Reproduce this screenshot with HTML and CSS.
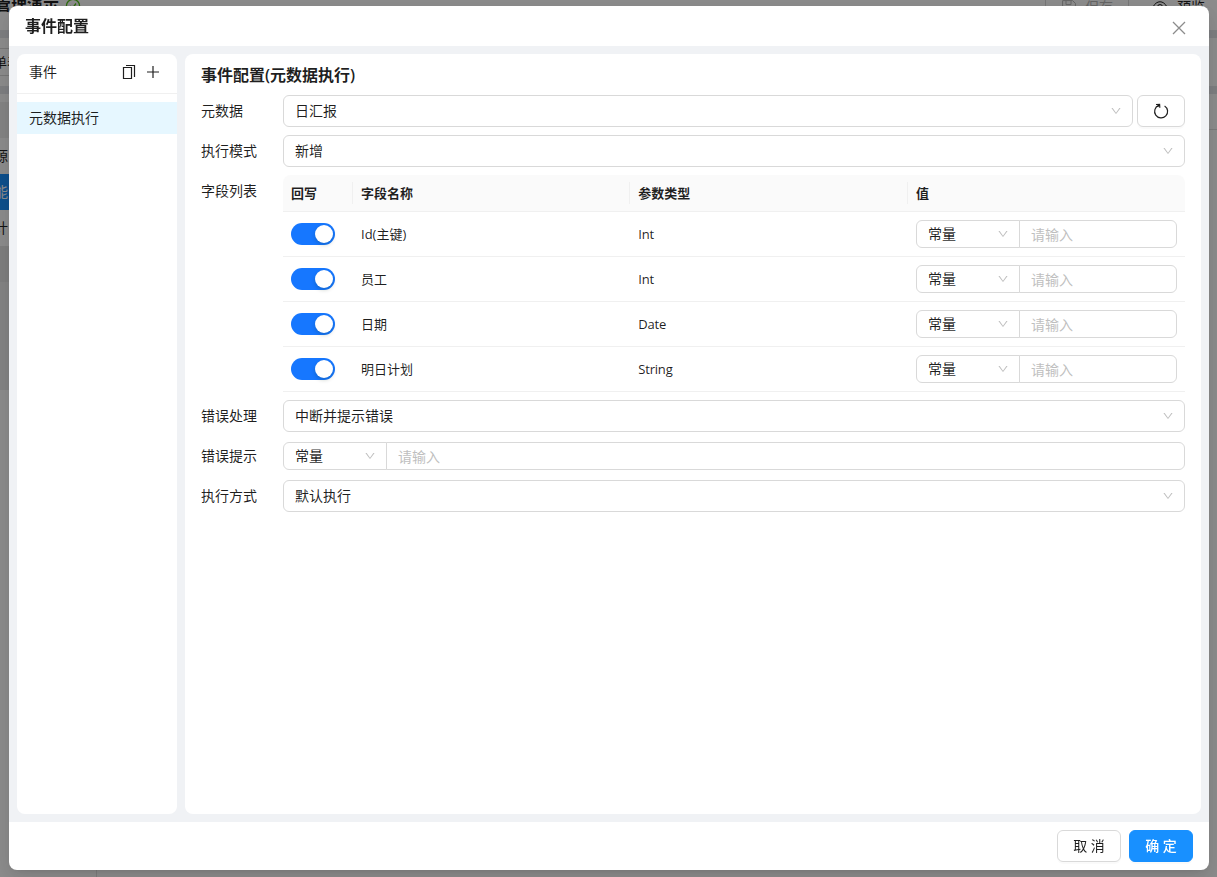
FILE: index.html
```html
<!DOCTYPE html>
<html lang="zh-CN">
<head>
  <meta charset="utf-8">
  <meta name="viewport" content="width=device-width">
  <title>事件配置</title>
  <link rel="stylesheet" href="styles.css">
</head>
<body>
  <svg class="sprite">
    <symbol id="down" viewBox="0 0 1024 1024">
      <path d="M884 256h-75c-5.1 0-9.9 2.5-12.9 6.6L512 654.2 227.9 262.6c-3-4.1-7.8-6.6-12.9-6.6h-75c-6.5 0-10.3 7.4-6.5 12.7l352.6 486.1c12.8 17.6 39 17.6 51.7 0l352.6-486.1c3.9-5.3.1-12.7-6.4-12.7z"/>
    </symbol>
  </svg>

  <!-- page behind the dialog -->
  <div class="page">
    <div class="page_top">
      <span class="page_title">管理演示</span>
      <svg class="page_check" width="16" height="16" viewBox="0 0 16 16"><circle cx="8" cy="8" r="6.6"/><path d="M5 8l2.300 2.500L11 5.500"/></svg>
      <span class="page_btn off">
        <svg width="14" height="14" viewBox="0 0 14 14"><path d="M.6.6h10l2.800 2.800v10H.6zM4 .6v4h5v-4"/></svg>保存
      </span>
      <span class="page_btn preview">
        <svg width="16" height="16" viewBox="0 0 16 16"><path d="M1 8c3.500-7 10.500-7 14 0c-3.500 7-10.500 7-14 0z"/><circle cx="8" cy="8" r="2.500"/></svg>预览
      </span>
    </div>
    <div class="page_tabs"><span>单表</span></div>
    <div class="page_body">
      <div class="page_menu">
        <div class="gap"></div>
        <div>资源</div>
        <div class="active">功能</div>
        <div>设计</div>
        <div class="dark"></div>
        <div class="mid"></div>
      </div>
      <div class="page_right"></div>
    </div>
  </div>
  <div class="mask"></div>

  <div class="modal">
    <div class="modal_header">
      <h1>事件配置</h1>
      <svg class="close" width="14" height="14" viewBox="0 0 14 14"><path d="M1 1l12 12M13 1L1 13"/></svg>
    </div>
    <div class="modal_body">
      <div class="side">
        <div class="side_header">
          <span>事件</span>
          <svg width="14" height="14" viewBox="0 0 14 14"><path d="M1.500 2.500h8v11h-8zM4 .5h8.500v11.500" stroke-width="1.200"/></svg>
          <svg width="14" height="14" viewBox="0 0 14 14"><path d="M7 1v12M1 7h12" stroke-width="1.200"/></svg>
        </div>
        <div class="side_item">元数据执行</div>
      </div>

      <div class="content">
        <h2>事件配置(元数据执行)</h2>
        <div class="row">
          <label>元数据</label>
          <div class="select">日汇报<svg><use href="#down"/></svg></div>
          <button class="reload"><svg width="16" height="16" viewBox="0 0 16 16"><path d="M5.600 2.400A6.500 6.500 0 1 0 11.600 2.900" stroke-width="1.200"/><path d="M3 1.500l3.600-.2.200 3.500M6.500 1.300L4.600 4" stroke-width="1.200"/></svg></button>
        </div>
        <div class="row">
          <label>执行模式</label>
          <div class="select">新增<svg><use href="#down"/></svg></div>
        </div>
        <div class="row list">
          <label>字段列表</label>
          <div class="table">
            <div class="tr th"><div>回写</div><div>字段名称</div><div>参数类型</div><div>值</div></div>
            <div class="tr">
              <div><span class="switch"></span></div><div>Id(主键)</div><div>Int</div>
              <div class="group"><div class="type">常量<svg><use href="#down"/></svg></div><input type="text" placeholder="请输入"></div>
            </div>
            <div class="tr">
              <div><span class="switch"></span></div><div>员工</div><div>Int</div>
              <div class="group"><div class="type">常量<svg><use href="#down"/></svg></div><input type="text" placeholder="请输入"></div>
            </div>
            <div class="tr">
              <div><span class="switch"></span></div><div>日期</div><div>Date</div>
              <div class="group"><div class="type">常量<svg><use href="#down"/></svg></div><input type="text" placeholder="请输入"></div>
            </div>
            <div class="tr">
              <div><span class="switch"></span></div><div>明日计划</div><div>String</div>
              <div class="group"><div class="type">常量<svg><use href="#down"/></svg></div><input type="text" placeholder="请输入"></div>
            </div>
          </div>
        </div>
        <div class="row">
          <label>错误处理</label>
          <div class="select">中断并提示错误<svg><use href="#down"/></svg></div>
        </div>
        <div class="row">
          <label>错误提示</label>
          <div class="group"><div class="type">常量<svg><use href="#down"/></svg></div><input type="text" placeholder="请输入"></div>
        </div>
        <div class="row">
          <label>执行方式</label>
          <div class="select">默认执行<svg><use href="#down"/></svg></div>
        </div>
      </div>
    </div>
    <div class="modal_footer">
      <button>取 消</button>
      <button class="primary">确 定</button>
    </div>
  </div>
</body>
</html>
```
FILE: styles.css
```css
*, *:before, *:after {
  box-sizing: border-box;
}
html, body {
  height: 100%;
}
body {
  margin: 0;
  overflow: hidden;
  font-family: "Open Sans", "Noto Sans CJK SC", sans-serif;
  font-size: 14px;
  line-height: 22px;
  color: rgba(0, 0, 0, 0.88);
}
svg {
  fill: none;
  stroke: currentColor;
  flex: none;
}
.sprite {
  display: none;
}
h1, h2 {
  margin: 0;
  font-size: 16px;
  line-height: 24px;
  font-weight: 600;
}
button, input {
  font-family: inherit;
  font-size: 14px;
  color: inherit;
}

/* page behind the dialog */
.page {
  height: 100%;
  display: flex;
  flex-direction: column;
  gap: 8px;
  background: #e4e6eb;
}
.page_top {
  height: 30px;
  display: flex;
  align-items: flex-start;
  background: #fff;
}
.page_title {
  width: 60px;
  margin-left: -5px;
  margin-top: -7px;
  font-size: 16px;
  font-weight: 600;
  white-space: nowrap;
}
.page_check {
  color: #52c41a;
  margin: -2px auto 0 10px;
  stroke-width: 1.3;
}
.page_btn {
  display: flex;
  align-items: center;
  gap: 9px;
  height: 32px;
  margin-top: -9px;
  border: 1px solid #d9d9d9;
}
.page_btn.off {
  width: 84px;
  padding-left: 16px;
  color: #b8b8b8;
}
.page_btn.preview {
  width: 88px;
  padding-left: 23px;
  border: none;
}
.page_tabs {
  height: 48px;
  padding-top: 10px;
  background: #fff;
}
.page_tabs span {
  display: block;
  width: 40px;
  height: 28px;
  margin-left: -7px;
  border: 1px solid #d9d9d9;
  line-height: 26px;
  font-size: 13px;
}
.page_body {
  flex: 1;
  display: flex;
  justify-content: space-between;
  background: #fff;
}
.page_menu {
  width: 97px;
  padding-top: 8px;
  border-right: 1px solid #e4e4e4;
}
.page_menu div {
  height: 36px;
  line-height: 36px;
  margin-left: -20px;
}
.page_menu .gap,
.page_menu .mid {
  background: #f0f0f0;
}
.page_menu .active {
  background: #1890ff;
  color: #fff;
}
.page_menu .dark {
  background: #e6e6e6;
}
.page_menu .mid {
  height: 108px;
}
.page_right {
  width: 60px;
  height: 36px;
  border-bottom: 1px solid #e0e0e0;
}
.mask {
  position: fixed;
  inset: 0;
  background: rgba(0, 0, 0, 0.45);
}

.modal {
  position: fixed;
  top: 6px;
  left: 9px;
  width: 1200px;
  height: 864px;
  display: flex;
  flex-direction: column;
  background: #fff;
  border-radius: 8px;
  overflow: hidden;
  box-shadow: 0 6px 16px 0 rgba(0, 0, 0, 0.08), 0 3px 6px -4px rgba(0, 0, 0, 0.12), 0 9px 28px 8px rgba(0, 0, 0, 0.05);
}
.modal_header {
  height: 40px;
  padding: 0 23px 0 16px;
  display: flex;
  align-items: center;
  justify-content: space-between;
}
.close {
  margin-top: 4px;
  color: #8c8c8c;
  stroke-width: 1.3;
}
.modal_body {
  flex: 1;
  display: flex;
  gap: 8px;
  padding: 8px;
  background: #f0f2f5;
}
.side, .content {
  background: #fff;
  border-radius: 8px;
}
.side {
  width: 160px;
}
.side_header {
  display: flex;
  align-items: center;
  gap: 10px;
  height: 40px;
  padding: 0 17px 3px 12px;
  border-bottom: 1px solid #f0f0f0;
}
.side_header span {
  flex: 1;
}
.side_item {
  height: 32px;
  margin-top: 8px;
  padding-left: 12px;
  line-height: 32px;
  background: #e6f7ff;
}
.content {
  flex: 1;
  padding: 9px 16px;
}
h2 {
  margin-bottom: 8px;
}
.row {
  display: flex;
  align-items: center;
  height: 32px;
  margin-bottom: 8px;
}
.row label {
  width: 82px;
  flex: none;
}
.row.list {
  height: auto;
  align-items: flex-start;
}
.row.list label {
  line-height: 32px;
}
.select {
  flex: 1;
  height: 32px;
  display: flex;
  align-items: center;
  justify-content: space-between;
  padding: 0 10px 0 11px;
  border: 1px solid #d9d9d9;
  border-radius: 6px;
}
.select svg, .type svg {
  width: 12px;
  height: 12px;
  fill: #bfbfbf;
  stroke: none;
}
.reload {
  width: 48px;
  height: 32px;
  margin-left: 4px;
}
.table {
  flex: 1;
  font-size: 13px;
}
.tr {
  display: grid;
  grid-template-columns: 70px 277.300px 277.700px 1fr;
  align-items: center;
  height: 45px;
  border-bottom: 1px solid #f0f0f0;
}
.tr > div {
  padding: 0 8px;
}
.tr > div:nth-child(3) {
  letter-spacing: -0.2px;
}
.tr.th {
  height: 37px;
  background: #fafafa;
  border-radius: 8px 8px 0 0;
  font-weight: 600;
}
.tr.th > div {
  letter-spacing: 0;
}
.th div + div {
  box-shadow: -1px 0 #f0f0f0;
}
.switch {
  display: block;
  width: 44px;
  height: 22px;
  padding: 2px;
  border-radius: 11px;
  background: #1677ff;
}
.switch:before {
  content: "";
  display: block;
  width: 18px;
  height: 18px;
  margin-left: auto;
  border-radius: 9px;
  background: #fff;
  box-shadow: 0 2px 4px 0 rgba(0, 35, 11, 0.2);
}
.group {
  flex: 1;
  display: flex;
  min-width: 0;
  font-size: 14px;
}
.type {
  width: 104px;
  height: 28px;
  display: flex;
  align-items: center;
  justify-content: space-between;
  padding: 0 10px 0 11px;
  border: 1px solid #d9d9d9;
  border-radius: 6px 0 0 6px;
}
.group input {
  flex: 1;
  min-width: 0;
  height: 28px;
  margin-left: -1px;
  padding: 0 11px;
  border: 1px solid #d9d9d9;
  border-radius: 0 6px 6px 0;
}
.group input::placeholder {
  color: #bfbfbf;
}

button {
  display: flex;
  align-items: center;
  justify-content: center;
  background: #fff;
  border: 1px solid #d9d9d9;
  border-radius: 6px;
  box-shadow: 0 2px 0 rgba(0, 0, 0, 0.02);
}
.modal_footer {
  height: 48px;
  display: flex;
  align-items: center;
  justify-content: flex-end;
  gap: 8px;
  padding: 0 16px;
}
.modal_footer button {
  width: 64px;
  height: 32px;
  padding-bottom: 3px;
}
.modal_footer .primary {
  background: #1890ff;
  border-color: #1890ff;
  color: #fff;
  font-weight: 500;
}
```
